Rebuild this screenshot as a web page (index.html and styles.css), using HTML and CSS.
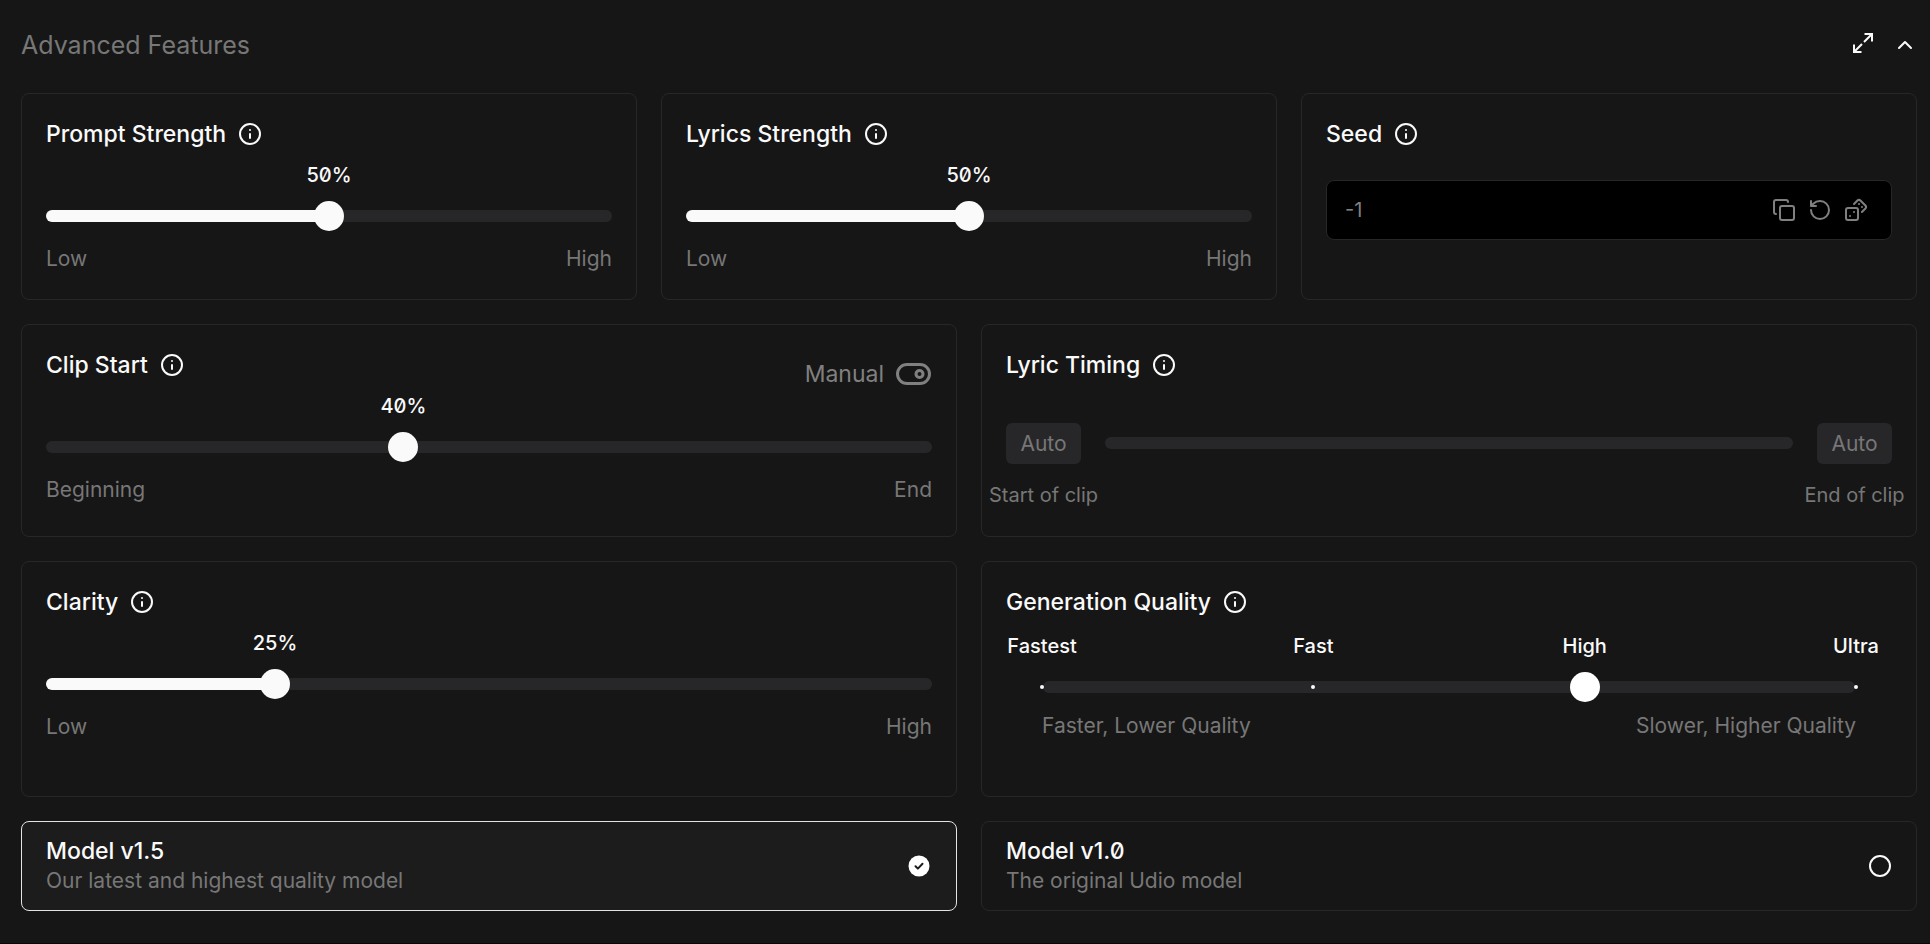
FILE: index.html
```html
<!DOCTYPE html>
<html lang="en">
<head>
<meta charset="utf-8">
<meta name="viewport" content="width=device-width, initial-scale=1">
<title>Advanced Features</title>
<link rel="stylesheet" href="styles.css">
</head>
<body>
<svg class="sprite" aria-hidden="true">
  <symbol id="icon-info" viewBox="0 0 24 24">
    <circle cx="12" cy="12" r="10"/>
    <path d="M12 16v-4M12 8h.01"/>
  </symbol>
</svg>
<main class="panel">
  <header class="panel-header">
    <h1 class="panel-title">Advanced Features</h1>
    <div class="panel-actions">
      <button class="icon-button" type="button" aria-label="Expand">
        <svg class="icon icon-sharp" viewBox="0 0 24 24"><path d="M13.500 1H21v7.500M20.500 1.500l-7.500 7.500M10.500 19H3v-7.500M3.500 18.500l7.500-7.500"/></svg>
      </button>
      <button class="icon-button" type="button" aria-label="Collapse">
        <svg class="icon" viewBox="0 0 24 24"><path d="m18 15-6-6-6 6"/></svg>
      </button>
    </div>
  </header>

  <div class="row row-three">
    <section class="card">
      <div class="card-head">
        <label class="card-title" for="prompt">Prompt Strength</label>
        <button class="icon-button" type="button" aria-label="About prompt strength"><svg class="icon"><use href="#icon-info"/></svg></button>
      </div>
      <div class="slider" style="--value: 0.5">
        <output class="slider-value" for="prompt">50%</output>
        <input class="range range-filled" id="prompt" type="range" min="0" max="100" value="50">
        <div class="ends"><span>Low</span><span>High</span></div>
      </div>
    </section>
    <section class="card">
      <div class="card-head">
        <label class="card-title" for="lyrics">Lyrics Strength</label>
        <button class="icon-button" type="button" aria-label="About lyrics strength"><svg class="icon"><use href="#icon-info"/></svg></button>
      </div>
      <div class="slider" style="--value: 0.5">
        <output class="slider-value" for="lyrics">50%</output>
        <input class="range range-filled" id="lyrics" type="range" min="0" max="100" value="50">
        <div class="ends"><span>Low</span><span>High</span></div>
      </div>
    </section>
    <section class="card">
      <div class="card-head">
        <label class="card-title" for="seed">Seed</label>
        <button class="icon-button" type="button" aria-label="About seed"><svg class="icon"><use href="#icon-info"/></svg></button>
      </div>
      <div class="seed">
        <input class="seed-input" id="seed" type="text" value="-1">
        <button class="icon-button" type="button" aria-label="Copy">
          <svg class="icon" viewBox="0 0 24 24"><rect x="8" y="8" width="14" height="14" rx="2"/><path d="M4 16c-1.1 0-2-.9-2-2V4c0-1.1.9-2 2-2h10c1.1 0 2 .9 2 2"/></svg>
        </button>
        <button class="icon-button" type="button" aria-label="Reset">
          <svg class="icon" viewBox="0 0 24 24"><path d="M3 12a9 9 0 1 0 9-9 9.750 9.750 0 0 0-6.740 2.740L3 8M3 3v5h5"/></svg>
        </button>
        <button class="icon-button" type="button" aria-label="Randomize">
          <svg class="icon" viewBox="0 0 24 24"><rect x="2" y="10" width="12" height="12" rx="2"/><path d="m17.920 14 3.500-3.500a2.240 2.240 0 0 0 0-3l-5-4.920a2.240 2.240 0 0 0-3 0L10 6M6 18h.01M10 14h.01M15 6h.01M18 9h.01"/></svg>
        </button>
      </div>
    </section>
  </div>

  <div class="row">
    <section class="card">
      <div class="card-head">
        <label class="card-title" for="clip">Clip Start</label>
        <button class="icon-button" type="button" aria-label="About clip start"><svg class="icon"><use href="#icon-info"/></svg></button>
        <button class="mode" type="button">
          <span>Manual</span>
          <svg class="mode-switch" viewBox="0 0 36 24"><rect x="1.500" y="2.500" width="32" height="19" rx="9.500"/><circle cx="23.500" cy="12" r="3.500"/></svg>
        </button>
      </div>
      <div class="slider" style="--value: 0.4">
        <output class="slider-value" for="clip">40%</output>
        <input class="range" id="clip" type="range" min="0" max="100" value="40">
        <div class="ends"><span>Beginning</span><span>End</span></div>
      </div>
    </section>
    <section class="card">
      <div class="card-head">
        <label class="card-title" for="timing">Lyric Timing</label>
        <button class="icon-button" type="button" aria-label="About lyric timing"><svg class="icon"><use href="#icon-info"/></svg></button>
      </div>
      <div class="timing">
        <div class="timing-end">
          <button class="auto" type="button">Auto</button>
          <span class="timing-label">Start of clip</span>
        </div>
        <div class="timing-track"><input class="range range-empty" id="timing" type="range" disabled></div>
        <div class="timing-end">
          <button class="auto" type="button">Auto</button>
          <span class="timing-label">End of clip</span>
        </div>
      </div>
    </section>
  </div>

  <div class="row">
    <section class="card">
      <div class="card-head">
        <label class="card-title" for="clarity">Clarity</label>
        <button class="icon-button" type="button" aria-label="About clarity"><svg class="icon"><use href="#icon-info"/></svg></button>
      </div>
      <div class="slider" style="--value: 0.25">
        <output class="slider-value" for="clarity">25%</output>
        <input class="range range-filled" id="clarity" type="range" min="0" max="100" value="25">
        <div class="ends"><span>Low</span><span>High</span></div>
      </div>
    </section>
    <section class="card">
      <div class="card-head">
        <label class="card-title" for="quality">Generation Quality</label>
        <button class="icon-button" type="button" aria-label="About generation quality"><svg class="icon"><use href="#icon-info"/></svg></button>
      </div>
      <div class="quality">
        <div class="marks"><span class="mark">Fastest</span><span class="mark">Fast</span><span class="mark">High</span><span class="mark">Ultra</span></div>
        <div class="steps">
          <div class="dots"><i class="dot"></i><i class="dot"></i><i class="dot"></i><i class="dot"></i></div>
          <input class="range range-steps" id="quality" type="range" min="0" max="3" value="2">
        </div>
        <div class="ends"><span>Faster, Lower Quality</span><span>Slower, Higher Quality</span></div>
      </div>
    </section>
  </div>

  <div class="row" role="radiogroup" aria-label="Model">
    <label class="card model model-selected">
      <span class="model-text"><span class="card-title">Model v1.5</span><span class="model-note">Our latest and highest quality model</span></span>
      <input class="radio" type="radio" name="model" checked>
      <svg class="icon model-check" viewBox="0 0 24 24"><circle cx="11" cy="12" r="10.500"/><path d="m7.500 12.200 2.400 2.400 4.600-4.800"/></svg>
    </label>
    <label class="card model">
      <span class="model-text"><span class="card-title">Model v1.0</span><span class="model-note">The original Udio model</span></span>
      <input class="radio" type="radio" name="model">
      <svg class="icon" viewBox="0 0 24 24"><circle cx="12" cy="12" r="10"/></svg>
    </label>
  </div>
</main>
</body>
</html>
```

FILE: styles.css
```css
* {
  box-sizing: border-box;
}

body {
  margin: 0;
  background: #161616;
  color: #fafafa;
  font-family: Inter, sans-serif;
  font-size: 20px;
  line-height: 28px;
  font-feature-settings: "zero";
}

button,
input {
  font: inherit;
  color: inherit;
  margin: 0;
}

button {
  padding: 0;
  border: 0;
  background: none;
}

.sprite {
  display: none;
}

.panel {
  display: flex;
  flex-direction: column;
  gap: 24px;
  padding: 20px 13px 32px 21px;
  border-bottom: 1px solid #080808;
}

.panel-header {
  display: flex;
  align-items: center;
  justify-content: space-between;
  height: 49px;
}

.panel-title {
  margin: 0;
  font-size: 25px;
  font-weight: 400;
  color: #777;
}

.panel-actions {
  display: flex;
  gap: 18px;
}

.icon-button {
  display: flex;
}

.icon {
  width: 24px;
  height: 24px;
  flex: none;
  overflow: visible;
  fill: none;
  stroke: currentColor;
  stroke-width: 2;
  stroke-linecap: round;
  stroke-linejoin: round;
}

.icon-sharp {
  stroke-linecap: butt;
  stroke-linejoin: miter;
}

.row {
  display: grid;
  grid-template-columns: repeat(2, minmax(0, 1fr));
  gap: 24px;
}

.row-three {
  grid-template-columns: repeat(3, minmax(0, 1fr));
}

.card {
  padding: 24px;
  border: 1px solid #272727;
  border-radius: 8px;
}

.card-head {
  display: flex;
  align-items: center;
  gap: 12px;
  height: 32px;
}

.card-title {
  font-size: 23px;
  font-weight: 500;
}

.slider {
  display: flex;
  flex-direction: column;
  padding: 11px 0 2px;
}

.slider-value {
  align-self: flex-start;
  margin-left: calc(15px + (100% - 30px) * var(--value));
  transform: translateX(-50%);
  font-weight: 500;
}

.range {
  appearance: none;
  width: 100%;
  height: 30px;
  margin: 12px 0 14px;
  background: none;
}

.range::-webkit-slider-runnable-track {
  height: 12px;
  border-radius: 6px;
  background: #27272a;
}

.range-filled::-webkit-slider-runnable-track {
  background: linear-gradient(90deg, #fafafa calc(15px + (100% - 30px) * var(--value)), #27272a 0);
}

.range::-webkit-slider-thumb {
  appearance: none;
  width: 30px;
  height: 30px;
  margin-top: -9px;
  border-radius: 50%;
  background: #fafafa;
}

.range-empty::-webkit-slider-thumb {
  visibility: hidden;
}

.ends {
  display: flex;
  justify-content: space-between;
  font-size: 21px;
  color: #777;
}

.seed {
  display: flex;
  align-items: center;
  gap: 12px;
  height: 60px;
  margin-top: 30px;
  padding: 0 23px 0 18px;
  border: 1px solid #272727;
  border-radius: 8px;
  background: #000;
  color: #808080;
}

.seed-input {
  flex: 1;
  min-width: 0;
  padding: 0;
  border: 0;
  outline: 0;
  background: none;
}

.mode {
  display: flex;
  align-items: center;
  gap: 12px;
  margin-left: auto;
  padding-top: 18px;
  font-size: 23px;
  color: #808080;
}

.mode-switch {
  width: 36px;
  height: 24px;
  fill: none;
  stroke: currentColor;
  stroke-width: 3;
}

.timing {
  display: flex;
  gap: 24px;
  padding: 42px 0 3px;
}

.timing-end {
  display: flex;
  flex-direction: column;
  align-items: center;
  gap: 17px;
  width: 75px;
}

.timing-label {
  white-space: nowrap;
  color: #777;
}

.auto {
  width: 75px;
  height: 41px;
  border-radius: 6px;
  background: #27272a;
  font-size: 21px;
  color: #777;
}

.timing-track {
  display: flex;
  align-items: center;
  flex: 1;
  height: 41px;
}

.quality {
  padding: 14px 36px 32px;
}

.marks {
  display: flex;
  justify-content: space-between;
  font-weight: 500;
}

.mark {
  display: flex;
  justify-content: center;
  width: 0;
  white-space: nowrap;
}

.steps {
  position: relative;
  display: flex;
  margin: 0 -15px;
}

.steps::before {
  content: "";
  position: absolute;
  inset: 21px 16px auto;
  height: 12px;
  border-radius: 6px;
  background: #27272a;
}

.dots {
  position: absolute;
  inset: 25px 13px auto;
  display: flex;
  justify-content: space-between;
}

.dot {
  width: 4px;
  height: 4px;
  border-radius: 50%;
  background: #fafafa;
}

.range-steps {
  position: relative;
  margin-bottom: 10px;
}

.range-steps::-webkit-slider-runnable-track {
  background: none;
}

.range-steps::-webkit-slider-thumb {
  background: #fff;
}

.model {
  display: flex;
  align-items: center;
  justify-content: space-between;
  padding: 15px 24px;
}

.model-selected {
  border-color: #e4e4e4;
  background: #1c1c1c;
}

.model-text {
  display: flex;
  flex-direction: column;
  gap: 2px;
}

.model-note {
  font-size: 21px;
  color: #777;
}

.radio {
  position: absolute;
  opacity: 0;
}

.model-check circle {
  fill: #fff;
  stroke: none;
}

.model-check path {
  stroke: #1c1c1c;
}
```
